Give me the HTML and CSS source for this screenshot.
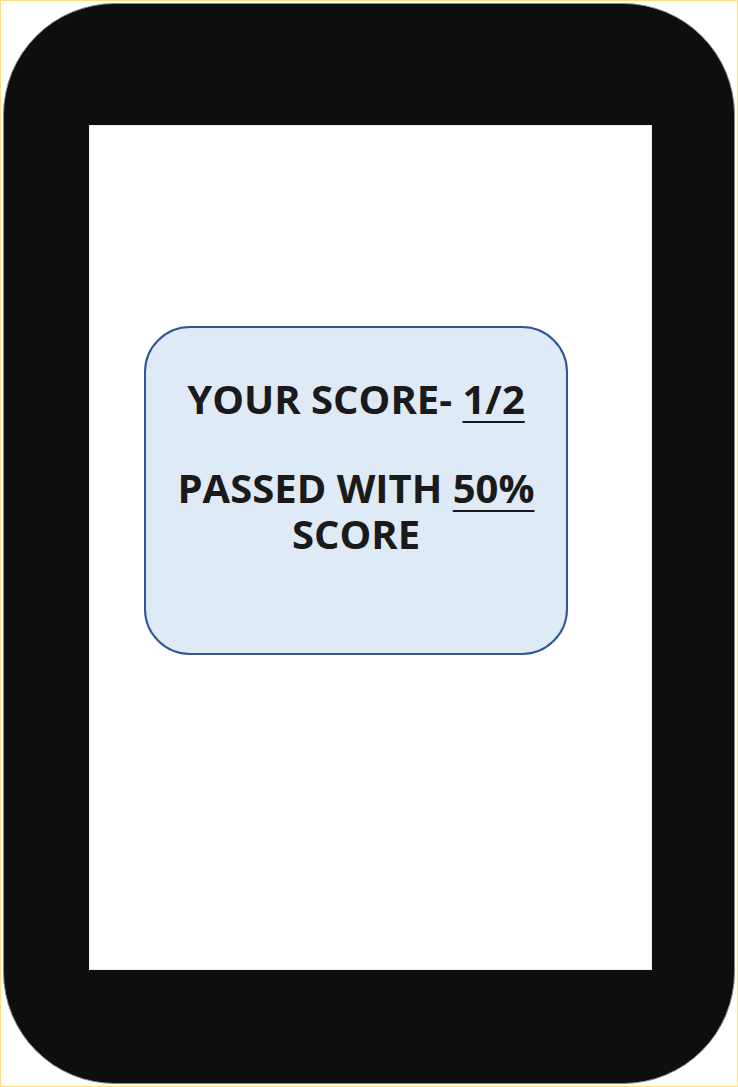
FILE: index.html
```html
<!DOCTYPE html>
<html>
<head>
<meta charset="utf-8">
<link rel="stylesheet" href="styles.css">
</head>
<body>
<div class="frame">
  <div class="phone">
    <div class="screen">
      <div class="card">
        <p class="line first">YOUR SCORE- <span class="u">1/2</span></p>
        <p class="line second">PASSED WITH <span class="u">50%</span></p>
        <p class="line third">SCORE</p>
      </div>
    </div>
  </div>
</div>
</body>
</html>
```
FILE: styles.css
```css
html, body {
  margin: 0;
  padding: 0;
  background: #ffffff;
}
.frame {
  width: 738px;
  height: 1087px;
  box-sizing: border-box;
  border: 1px solid #ffdf80;
  padding: 2px;
}
.phone {
  width: 732px;
  height: 1081px;
  box-sizing: border-box;
  background: #0e0e0e;
  border: 1px solid #8a8a8a;
  border-radius: 112px;
  padding: 121px 82px 113px 85px;
}
.screen {
  width: 563px;
  height: 845px;
  box-sizing: border-box;
  background: #ffffff;
  border: 1px solid #ededed;
  padding: 200px 0 0 54px;
}
.card {
  width: 424px;
  height: 329px;
  box-sizing: border-box;
  background: #deeaf6;
  border: 2px solid #2f5597;
  border-radius: 46px;
  padding-top: 48px;
  text-align: center;
  font-family: "Open Sans", "Noto Sans", sans-serif;
  font-weight: 700;
  color: #1a1a1a;
  font-size: 40px;
  line-height: 46px;
}
.line {
  margin: 0;
  letter-spacing: 0;
}
.second {
  margin-top: 43px;
}
.u {
  text-decoration: underline;
  text-decoration-thickness: 2px;
  text-underline-offset: 7px;
}
```
